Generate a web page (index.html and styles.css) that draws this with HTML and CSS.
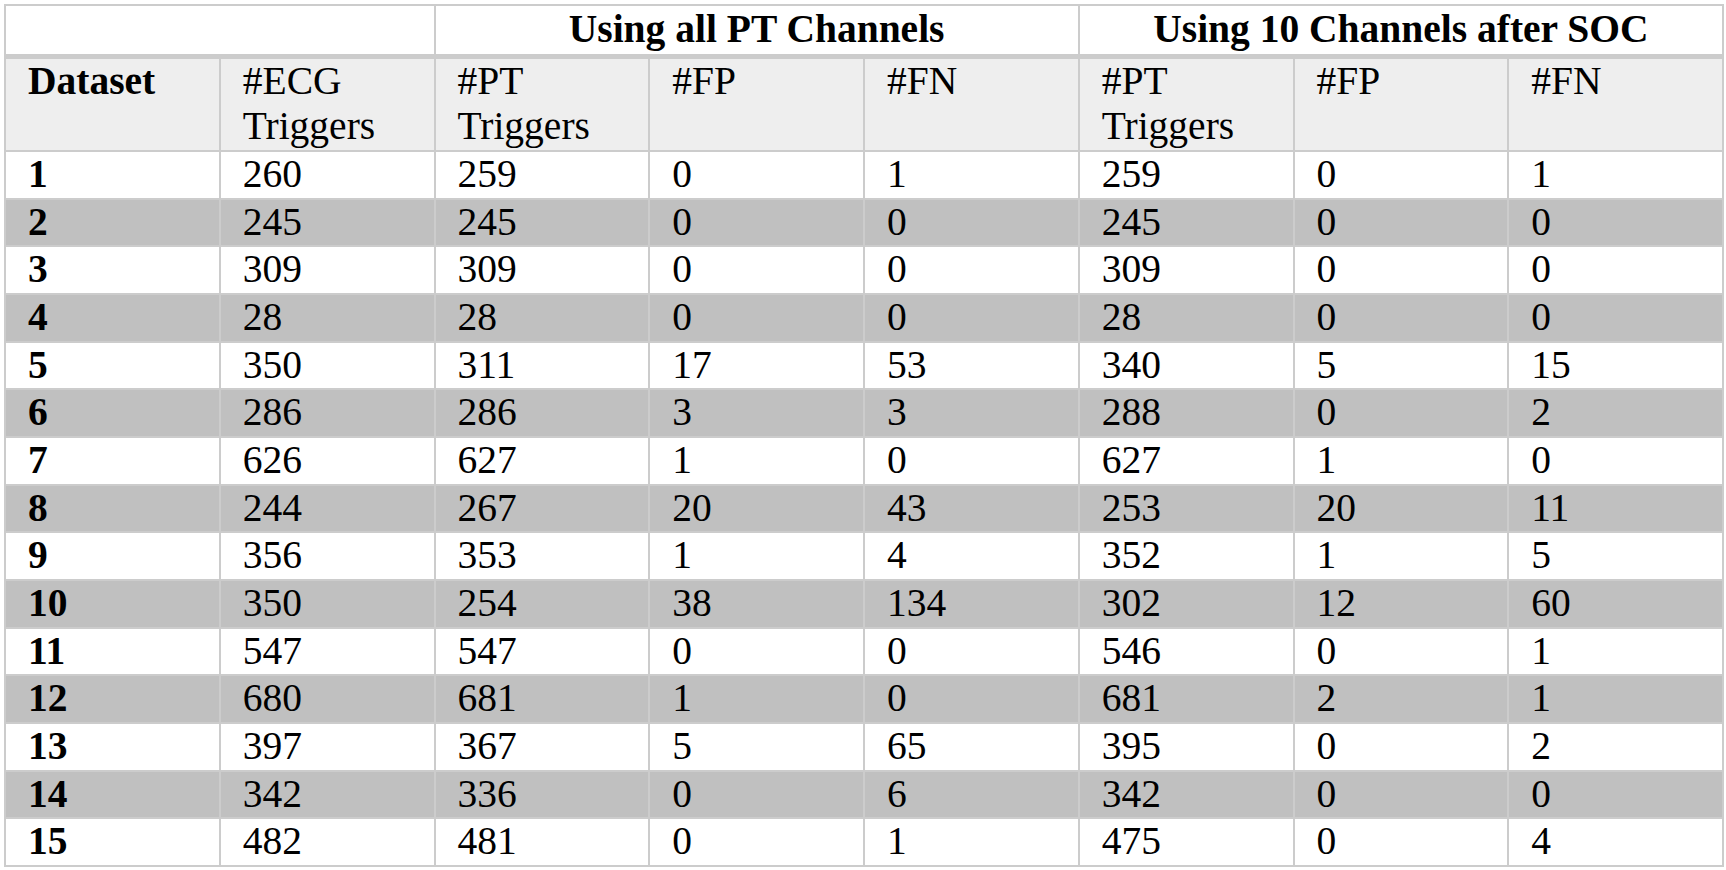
FILE: index.html
```html
<!DOCTYPE html>
<html>
<head>
<meta charset="utf-8">
<link rel="stylesheet" href="styles.css">
</head>
<body>
<table class="results">
  <colgroup>
    <col><col><col><col><col><col><col><col>
  </colgroup>
  <thead>
    <tr class="group-row">
      <th colspan="2"></th>
      <th colspan="3" class="group">Using all PT Channels</th>
      <th colspan="3" class="group">Using 10 Channels after SOC</th>
    </tr>
    <tr class="head-row">
      <th class="key">Dataset</th>
      <th>#ECG<br>Triggers</th>
      <th>#PT<br>Triggers</th>
      <th>#FP</th>
      <th>#FN</th>
      <th>#PT<br>Triggers</th>
      <th>#FP</th>
      <th>#FN</th>
    </tr>
  </thead>
  <tbody>
    <tr><td class="key">1</td><td>260</td><td>259</td><td>0</td><td>1</td><td>259</td><td>0</td><td>1</td></tr>
    <tr class="alt"><td class="key">2</td><td>245</td><td>245</td><td>0</td><td>0</td><td>245</td><td>0</td><td>0</td></tr>
    <tr><td class="key">3</td><td>309</td><td>309</td><td>0</td><td>0</td><td>309</td><td>0</td><td>0</td></tr>
    <tr class="alt"><td class="key">4</td><td>28</td><td>28</td><td>0</td><td>0</td><td>28</td><td>0</td><td>0</td></tr>
    <tr><td class="key">5</td><td>350</td><td>311</td><td>17</td><td>53</td><td>340</td><td>5</td><td>15</td></tr>
    <tr class="alt"><td class="key">6</td><td>286</td><td>286</td><td>3</td><td>3</td><td>288</td><td>0</td><td>2</td></tr>
    <tr><td class="key">7</td><td>626</td><td>627</td><td>1</td><td>0</td><td>627</td><td>1</td><td>0</td></tr>
    <tr class="alt"><td class="key">8</td><td>244</td><td>267</td><td>20</td><td>43</td><td>253</td><td>20</td><td>11</td></tr>
    <tr><td class="key">9</td><td>356</td><td>353</td><td>1</td><td>4</td><td>352</td><td>1</td><td>5</td></tr>
    <tr class="alt"><td class="key">10</td><td>350</td><td>254</td><td>38</td><td>134</td><td>302</td><td>12</td><td>60</td></tr>
    <tr><td class="key">11</td><td>547</td><td>547</td><td>0</td><td>0</td><td>546</td><td>0</td><td>1</td></tr>
    <tr class="alt"><td class="key">12</td><td>680</td><td>681</td><td>1</td><td>0</td><td>681</td><td>2</td><td>1</td></tr>
    <tr><td class="key">13</td><td>397</td><td>367</td><td>5</td><td>65</td><td>395</td><td>0</td><td>2</td></tr>
    <tr class="alt"><td class="key">14</td><td>342</td><td>336</td><td>0</td><td>6</td><td>342</td><td>0</td><td>0</td></tr>
    <tr><td class="key">15</td><td>482</td><td>481</td><td>0</td><td>1</td><td>475</td><td>0</td><td>4</td></tr>
  </tbody>
</table>
</body>
</html>
```
FILE: styles.css
```css
html, body {
  margin: 0;
  padding: 0;
  background: #ffffff;
}

body {
  padding: 4px;
  font-family: "Liberation Serif", "Times New Roman", serif;
  font-size: 39.5px;
  color: #000000;
}

.results {
  border-collapse: collapse;
  table-layout: fixed;
  width: 1720px;
}

.results th,
.results td {
  border: 2px solid #cccccc;
  padding: 0 0 0 22px;
  line-height: 45.65px;
  text-align: left;
  vertical-align: top;
  font-weight: normal;
}

.group-row th {
  background: #ffffff;
  padding: 1px 0;
  border-bottom: 5px solid #cccccc;
}

.group-row th.group {
  text-align: center;
  font-weight: bold;
}

.head-row th {
  background: #eeeeee;
}

.results .key {
  font-weight: bold;
}

.results tr.alt td {
  background: #c0c0c0;
}
```
